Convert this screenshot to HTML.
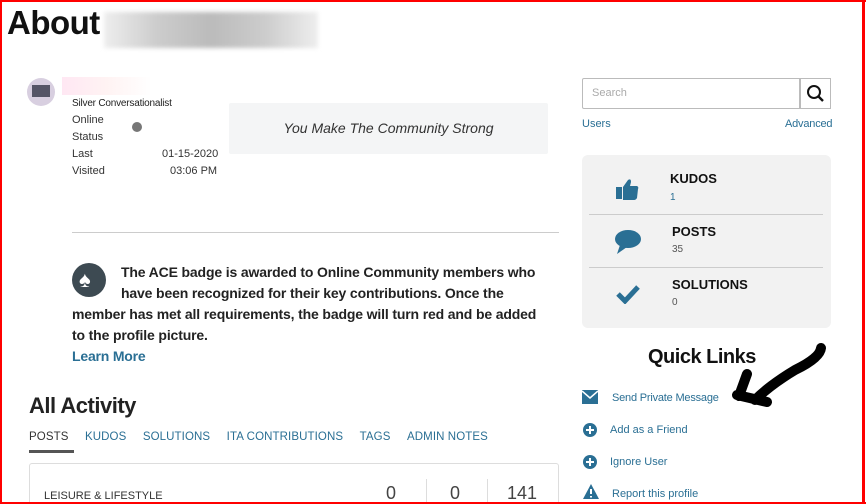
<!DOCTYPE html>
<html><head><meta charset="utf-8"><style>
*{margin:0;padding:0;box-sizing:border-box}
html,body{width:866px;height:504px;overflow:hidden}
body{background:#fff;font-family:"Liberation Sans",sans-serif;position:relative;color:#222}
.a{position:absolute;white-space:nowrap}
.frame{position:absolute;left:0;top:0;width:866px;height:504px;border:2px solid #f00;border-right:none;pointer-events:none}
.rline{position:absolute;left:862px;top:0;width:3px;height:504px;background:#f00}
.sm{font-size:11px;color:#333}
.ace{font-size:14px;font-weight:bold;color:#222;letter-spacing:-0.15px}
</style></head><body>
<div class="a" style="left:7px;top:4px;font-size:33px;font-weight:bold;color:#111;letter-spacing:-0.5px">About</div>
<div class="a" style="left:104px;top:12px;width:214px;height:36px;background:linear-gradient(90deg,#eee,#ccc,#bbb,#ccc,#eee);filter:blur(2px)"></div>
<div class="a" style="left:27px;top:78px;width:28px;height:28px;border-radius:50%;background:#d8cfe0"></div>
<div class="a" style="left:32px;top:85px;width:18px;height:12px;background:#556"></div>
<div class="a" style="left:62px;top:77px;width:90px;height:18px;background:linear-gradient(90deg,#fde,#fee,#fff);opacity:.7"></div>
<div class="a" style="left:72px;top:98px;font-size:10px;color:#222;letter-spacing:-0.2px">Silver Conversationalist</div>
<div class="a sm" style="left:72px;top:114px">Online</div>
<div class="a sm" style="left:72px;top:131px">Status</div>
<div class="a" style="left:132px;top:122px;width:10px;height:10px;border-radius:50%;background:#777"></div>
<div class="a sm" style="left:72px;top:148px">Last</div>
<div class="a sm" style="left:72px;top:165px">Visited</div>
<div class="a sm" style="left:162px;top:148px">01-15-2020</div>
<div class="a sm" style="left:170px;top:165px">03:06 PM</div>
<div class="a" style="left:229px;top:103px;width:319px;height:51px;background:#f4f5f6;border-radius:2px;text-align:center;line-height:51px;font-style:italic;font-size:14px;color:#333">You Make The Community Strong</div>
<div class="a" style="left:72px;top:232px;width:487px;height:1px;background:#ccc"></div>
<div class="a" style="left:72px;top:263px;width:34px;height:34px;border-radius:50%;background:#3d4a52"></div>
<div class="a" style="left:79px;top:267px;font-size:22px;color:#fff">♠</div>
<div class="a ace" style="left:121px;top:264px">The ACE badge is awarded to Online Community members who</div>
<div class="a ace" style="left:121px;top:285px">have been recognized for their key contributions. Once the</div>
<div class="a ace" style="left:72px;top:306px">member has met all requirements, the badge will turn red and be added</div>
<div class="a ace" style="left:72px;top:327px">to the profile picture.</div>
<div class="a" style="left:72px;top:348px;font-size:14px;font-weight:bold;color:#2a6f94;letter-spacing:-0.2px">Learn More</div>
<div class="a" style="left:29px;top:393px;font-size:22px;font-weight:bold;color:#222;letter-spacing:-0.5px">All Activity</div>
<div class="a" style="left:29px;top:431px;font-size:11.5px;color:#2a6f94;letter-spacing:0.1px">
<span style="color:#333">POSTS</span>&nbsp;&nbsp;&nbsp;&nbsp;&nbsp;KUDOS&nbsp;&nbsp;&nbsp;&nbsp;&nbsp;SOLUTIONS&nbsp;&nbsp;&nbsp;&nbsp;&nbsp;ITA CONTRIBUTIONS&nbsp;&nbsp;&nbsp;&nbsp;&nbsp;TAGS&nbsp;&nbsp;&nbsp;&nbsp;&nbsp;ADMIN NOTES</div>
<div class="a" style="left:29px;top:450px;width:45px;height:3px;background:#555"></div>
<div class="a" style="left:29px;top:463px;width:530px;height:50px;border:1px solid #ddd;border-radius:3px"></div>
<div class="a" style="left:44px;top:490px;font-size:11px;color:#333">LEISURE &amp; LIFESTYLE</div>
<div class="a" style="left:386px;top:483px;font-size:18px;color:#444">0</div>
<div class="a" style="left:426px;top:479px;width:1px;height:30px;background:#ddd"></div>
<div class="a" style="left:450px;top:483px;font-size:18px;color:#444">0</div>
<div class="a" style="left:487px;top:479px;width:1px;height:30px;background:#ddd"></div>
<div class="a" style="left:507px;top:483px;font-size:18px;color:#444">141</div>
<div class="a" style="left:582px;top:78px;width:218px;height:31px;border:1px solid #bbb;border-radius:2px 0 0 2px"></div>
<div class="a" style="left:592px;top:87px;font-size:11px;color:#aaa">Search</div>
<div class="a" style="left:800px;top:78px;width:31px;height:31px;border:1px solid #bbb"></div>
<svg class="a" style="left:806px;top:84px" width="20" height="20" viewBox="0 0 20 20"><circle cx="8" cy="8" r="6" fill="none" stroke="#111" stroke-width="2"/><line x1="12.5" y1="12.5" x2="17" y2="17" stroke="#111" stroke-width="2.4"/></svg>
<div class="a" style="left:582px;top:118px;font-size:11px;color:#2a6f94">Users</div>
<div class="a" style="left:785px;top:118px;font-size:11px;color:#2a6f94;letter-spacing:-0.2px">Advanced</div>
<div class="a" style="left:582px;top:155px;width:249px;height:173px;background:#f2f2f2;border-radius:6px"></div>
<div class="a" style="left:589px;top:214px;width:234px;height:1px;background:#ccc"></div>
<div class="a" style="left:589px;top:267px;width:234px;height:1px;background:#ccc"></div>
<svg class="a" style="left:615px;top:176px" width="26" height="26" viewBox="0 0 26 26"><rect x="1" y="11" width="6" height="12" fill="#2a6f94"/><path d="M8 11 L13 4 Q16 2 16 6 L15 10 L22 10 Q24 11 23 13 L22 22 Q21 24 19 24 L8 24Z" fill="#2a6f94"/></svg>
<div class="a" style="left:670px;top:171px;font-size:13px;font-weight:bold;color:#111">KUDOS</div>
<div class="a" style="left:670px;top:192px;font-size:10px;color:#2a6f94">1</div>
<svg class="a" style="left:614px;top:229px" width="28" height="26" viewBox="0 0 28 26"><ellipse cx="14" cy="10" rx="13" ry="9" fill="#2a6f94"/><path d="M6 16 L3 25 L13 18Z" fill="#2a6f94"/></svg>
<div class="a" style="left:672px;top:224px;font-size:13px;font-weight:bold;color:#111">POSTS</div>
<div class="a" style="left:672px;top:244px;font-size:10px;color:#555">35</div>
<svg class="a" style="left:616px;top:284px" width="24" height="20" viewBox="0 0 24 20"><path d="M2 10 L9 17 L22 3" fill="none" stroke="#2a6f94" stroke-width="5"/></svg>
<div class="a" style="left:672px;top:277px;font-size:13px;font-weight:bold;color:#111">SOLUTIONS</div>
<div class="a" style="left:672px;top:297px;font-size:10px;color:#555">0</div>
<div class="a" style="left:648px;top:346px;font-size:20px;font-weight:bold;color:#111;letter-spacing:-0.5px">Quick Links</div>
<svg class="a" style="left:725px;top:340px" width="110" height="70" viewBox="0 0 110 70"><path d="M96 8 Q95 18 70 30 Q45 45 30 60" fill="none" stroke="#000" stroke-width="10" stroke-linecap="round"/><path d="M12 55 L42 62 M14 56 L22 34" fill="none" stroke="#000" stroke-width="10" stroke-linecap="round"/></svg>
<svg class="a" style="left:582px;top:390px" width="16" height="14" viewBox="0 0 16 14"><rect x="0" y="0" width="16" height="14" fill="#2a6f94"/><path d="M0 1 L8 8 L16 1" fill="none" stroke="#fff" stroke-width="1.5"/></svg>
<div class="a" style="left:612px;top:392px;font-size:11px;color:#2a6f94;letter-spacing:-0.2px">Send Private Message</div>
<svg class="a" style="left:583px;top:423px" width="14" height="14" viewBox="0 0 14 14"><circle cx="7" cy="7" r="7" fill="#2a6f94"/><path d="M7 3v8M3 7h8" stroke="#fff" stroke-width="2"/></svg>
<div class="a" style="left:610px;top:424px;font-size:11px;color:#2a6f94">Add as a Friend</div>
<svg class="a" style="left:583px;top:455px" width="14" height="14" viewBox="0 0 14 14"><circle cx="7" cy="7" r="7" fill="#2a6f94"/><path d="M7 3v8M3 7h8" stroke="#fff" stroke-width="2"/></svg>
<div class="a" style="left:610px;top:456px;font-size:11px;color:#2a6f94">Ignore User</div>
<svg class="a" style="left:583px;top:484px" width="16" height="15" viewBox="0 0 16 15"><path d="M8 0 L16 15 L0 15Z" fill="#2a6f94"/><path d="M8 5v5M8 12v1.5" stroke="#fff" stroke-width="2"/></svg>
<div class="a" style="left:612px;top:488px;font-size:11px;color:#2a6f94">Report this profile</div>
<div class="frame"></div><div class="rline"></div>
</body></html>
